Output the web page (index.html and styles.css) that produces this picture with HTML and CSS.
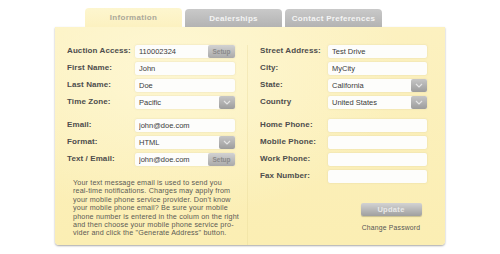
FILE: index.html
```html
<!DOCTYPE html>
<html lang="en">
<head>
  <meta charset="UTF-8" />
  <title>Account | Information</title>
  <link rel="stylesheet" href="styles.css">
</head>
<body>

  <div class="account">
    <div class="tabs">
      <div class="tab active">Information</div>
      <div class="tab">Dealerships</div>
      <div class="tab">Contact Preferences</div>
    </div>

    <div class="panel">
      <div class="col left">
        <div class="group">
          <div class="row">
            <label>Auction Access:</label>
            <div class="field">
              <input type="text" value="110002324" />
              <button class="setup">Setup</button>
            </div>
          </div>
          <div class="row">
            <label>First Name:</label>
            <div class="field"><input type="text" value="John" /></div>
          </div>
          <div class="row">
            <label>Last Name:</label>
            <div class="field"><input type="text" value="Doe" /></div>
          </div>
          <div class="row">
            <label>Time Zone:</label>
            <div class="field select">
              <span class="value">Pacific</span>
              <span class="arrow"><svg width="8" height="5" viewBox="0 0 8 5"><path d="M1 1 L4 4 L7 1" fill="none" stroke="#e4e4e4" stroke-width="1.2"/></svg></span>
            </div>
          </div>
        </div>

        <div class="group">
          <div class="row">
            <label>Email:</label>
            <div class="field"><input type="text" value="john@doe.com" /></div>
          </div>
          <div class="row">
            <label>Format:</label>
            <div class="field select">
              <span class="value">HTML</span>
              <span class="arrow"><svg width="8" height="5" viewBox="0 0 8 5"><path d="M1 1 L4 4 L7 1" fill="none" stroke="#e4e4e4" stroke-width="1.2"/></svg></span>
            </div>
          </div>
          <div class="row">
            <label>Text / Email:</label>
            <div class="field">
              <input type="text" value="john@doe.com" />
              <button class="setup">Setup</button>
            </div>
          </div>
        </div>

        <p class="note">
          Your text message email is used to send you<br>
          real-time notifications. Charges may apply from<br>
          your mobile phone service provider. Don't know<br>
          your mobile phone email? Be sure your mobile<br>
          phone number is entered in the colum on the right<br>
          and then choose your mobile phone service pro-<br>
          vider and click the "Generate Address" button.
        </p>
      </div>

      <div class="col right">
        <div class="group">
          <div class="row">
            <label>Street Address:</label>
            <div class="field"><input type="text" value="Test Drive" /></div>
          </div>
          <div class="row">
            <label>City:</label>
            <div class="field"><input type="text" value="MyCity" /></div>
          </div>
          <div class="row">
            <label>State:</label>
            <div class="field select">
              <span class="value">California</span>
              <span class="arrow"><svg width="8" height="5" viewBox="0 0 8 5"><path d="M1 1 L4 4 L7 1" fill="none" stroke="#e4e4e4" stroke-width="1.2"/></svg></span>
            </div>
          </div>
          <div class="row">
            <label>Country</label>
            <div class="field select">
              <span class="value">United States</span>
              <span class="arrow"><svg width="8" height="5" viewBox="0 0 8 5"><path d="M1 1 L4 4 L7 1" fill="none" stroke="#e4e4e4" stroke-width="1.2"/></svg></span>
            </div>
          </div>
        </div>

        <div class="group">
          <div class="row">
            <label>Home Phone:</label>
            <div class="field"><input type="text" value="" /></div>
          </div>
          <div class="row">
            <label>Mobile Phone:</label>
            <div class="field"><input type="text" value="" /></div>
          </div>
          <div class="row">
            <label>Work Phone:</label>
            <div class="field"><input type="text" value="" /></div>
          </div>
          <div class="row">
            <label>Fax Number:</label>
            <div class="field"><input type="text" value="" /></div>
          </div>
        </div>

        <div class="actions">
          <button class="update">Update</button>
          <a class="change-pw">Change Password</a>
        </div>
      </div>
    </div>
  </div>

</body>
</html>
```

FILE: styles.css
```css
* { margin: 0; padding: 0; box-sizing: border-box; }
body {
  font-family: 'Liberation Sans', Arial, sans-serif;
  background: #fff;
  width: 500px;
  height: 254px;
  overflow: hidden;
}
.account {
  margin-left: 55px;
  padding-top: 8px;
  width: 390px;
}
.tabs {
  display: flex;
  align-items: flex-end;
  gap: 3px;
  padding-left: 30px;
  height: 19px;
}
.tab {
  width: 97px;
  height: 18px;
  border-radius: 4px 4px 0 0;
  background: linear-gradient(#c9c9c9, #b3b3b3);
  color: #f4f4f4;
  font-size: 8px;
  font-weight: bold;
  letter-spacing: 0.3px;
  text-align: center;
  line-height: 19px;
}
.tab.active {
  height: 19px;
  background: linear-gradient(#fdf6cf, #fcf1c0);
  color: #aba899;
}
.panel {
  display: flex;
  height: 218px;
  padding: 18px 18px 0 12px;
  border-radius: 0 0 4px 4px;
  background:
    radial-gradient(ellipse at 30% 20%, rgba(255, 250, 220, 0.7), rgba(255, 250, 220, 0) 60%),
    linear-gradient(#fcf1c0, #fbeeb3);
  box-shadow: 0 1px 2px rgba(0, 0, 0, 0.35);
}
.col { width: 168px; }
.col.left {
  width: 181px;
  border-right: 1px solid rgba(230, 215, 150, 0.35);
}
.col.right {
  width: 179px;
  padding-left: 12px;
}
.group + .group { margin-top: 10px; }
.row {
  display: flex;
  align-items: center;
  height: 13px;
  margin-bottom: 4px;
}
label {
  width: 68px;
  flex-shrink: 0;
  font-size: 8px;
  font-weight: bold;
  color: #4d4d4d;
  letter-spacing: 0.1px;
  margin-top: -2px;
}
.field {
  position: relative;
  display: flex;
  align-items: center;
  width: 100px;
  height: 13px;
  background: #fdfdfb;
  border-radius: 2px;
  box-shadow: 0 0 2px rgba(180, 170, 120, 0.35);
}
.field input {
  width: 100%;
  height: 100%;
  border: none;
  outline: none;
  background: transparent;
  padding-left: 4px;
  font-family: inherit;
  font-size: 7.5px;
  color: #3a3a3a;
  -webkit-text-fill-color: #3a3a3a;
}
.field .value {
  flex: 1;
  padding-left: 4px;
  font-size: 7.5px;
  color: #3a3a3a;
}
.arrow {
  display: flex;
  align-items: center;
  justify-content: center;
  width: 16px;
  height: 13px;
  border-radius: 2px;
  background: linear-gradient(#c6c6c6, #9c9c9c);
}
.setup {
  position: absolute;
  right: 0;
  top: 0;
  width: 27px;
  height: 13px;
  border: none;
  border-radius: 2px;
  background: linear-gradient(#d2d2d2, #a9a9a9);
  font-family: inherit;
  font-size: 6.5px;
  font-weight: bold;
  color: #8a8a8a;
}
.note {
  margin: 13px 0 0 6px;
  font-size: 7.2px;
  line-height: 8.4px;
  letter-spacing: 0.15px;
  color: #5b5b55;
  white-space: nowrap;
}
.actions {
  display: flex;
  flex-direction: column;
  align-items: center;
  width: 62px;
  margin: 20px 0 0 100px;
}
.update {
  width: 61px;
  height: 13px;
  border: none;
  border-radius: 2px;
  background: linear-gradient(#d3d3d3, #9f9f9f);
  box-shadow: 0 1px 1px rgba(0, 0, 0, 0.2);
  font-family: inherit;
  font-size: 7.5px;
  font-weight: bold;
  letter-spacing: 0.3px;
  color: #e8e8e8;
}
.change-pw {
  margin-top: 8px;
  font-size: 6.8px;
  letter-spacing: 0.2px;
  color: #555;
  white-space: nowrap;
}
```
